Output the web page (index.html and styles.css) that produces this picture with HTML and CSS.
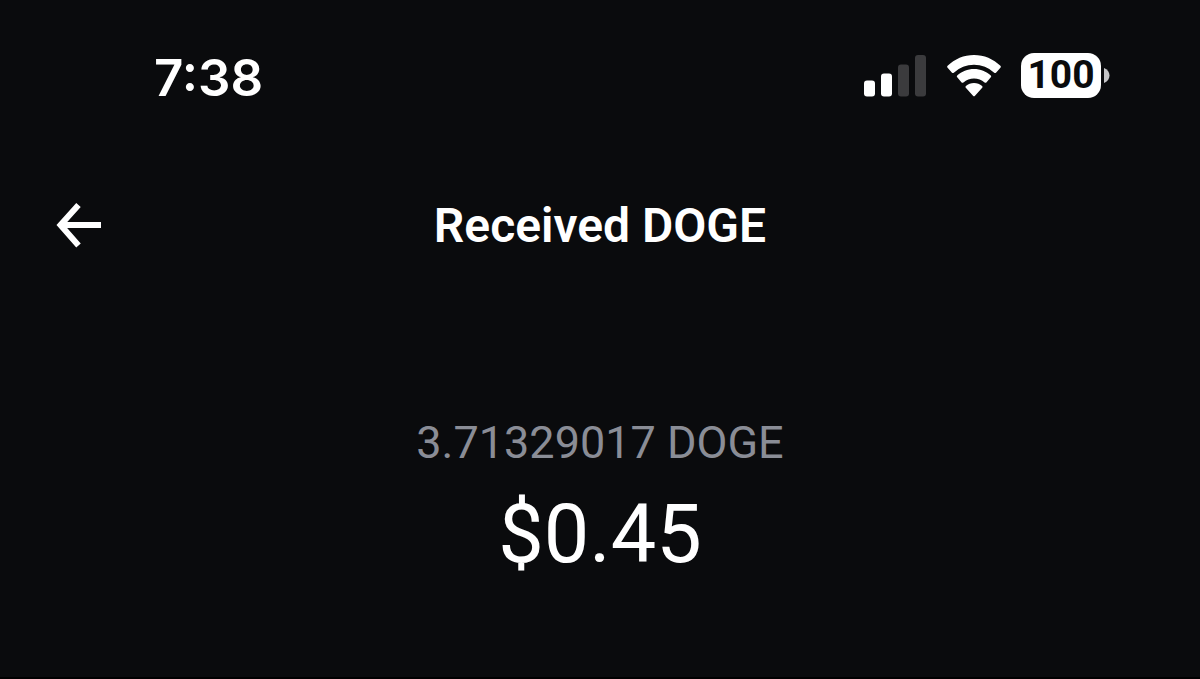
FILE: index.html
```
<!DOCTYPE html>
<html lang="en">
<head>
    <meta charset="UTF-8">
    <meta name="viewport" content="width=device-width, initial-scale=1.0">
    <title>Received DOGE</title>
    <link rel="stylesheet" href="styles.css">
</head>
<body>
    <div class="status-bar">
        <time class="clock">7:38</time>
        <div class="status-icons">
            <svg class="signal" width="63" height="42" viewBox="0 0 63 42" aria-hidden="true">
                <rect x="0" y="25.500" width="11" height="16" rx="3" fill="#fff"/>
                <rect x="17" y="18.500" width="11" height="23" rx="3" fill="#fff"/>
                <rect x="34" y="9.500" width="11" height="32" rx="3" fill="#3b3b3d"/>
                <rect x="51" y="0" width="11" height="41.500" rx="3" fill="#3b3b3d"/>
            </svg>
            <svg class="wifi" width="54" height="42" viewBox="0 0 54 42" fill="#fff" aria-hidden="true">
                <path d="M27 0C17 0 7.500 4 .6 10.800Q-.3 11.800.6 12.700L5 17.700Q5.900 18.500 6.800 17.700A29.500 29.500 0 0 1 47.200 17.700Q48.100 18.500 49 17.700L53.400 12.700Q54.300 11.800 53.400 10.800C46.500 4 37 0 27 0Z"/>
                <path d="M27 14C20.600 14 14.700 16.500 10.200 20.500Q9.300 21.400 10.200 22.300L14.600 27.400Q15.500 28.200 16.400 27.400A16 16 0 0 1 37.600 27.400Q38.500 28.200 39.400 27.400L43.800 22.300Q44.700 21.400 43.800 20.500C39.300 16.500 33.400 14 27 14Z"/>
                <path d="M27 28C23.900 28 21.100 29.100 18.900 30.900Q17.900 31.800 18.800 32.700L26 40.800Q27 41.800 28 40.800L35.200 32.700Q36.100 31.800 35.100 30.900C32.900 29.100 30.100 28 27 28Z"/>
            </svg>
            <div class="battery">
                <span class="battery-level">100</span>
                <svg width="6" height="15" viewBox="0 0 6 15" aria-hidden="true">
                    <path d="M0 0C3.500 1.500 5.500 4.200 5.500 7.500S3.500 13.500 0 15Z" fill="#c4c4c6"/>
                </svg>
            </div>
        </div>
    </div>

    <header class="top-nav">
        <button type="button" class="back" aria-label="Back">
            <svg width="46" height="46" viewBox="0 0 46 46" fill="none" stroke="#fff" stroke-width="6" aria-hidden="true">
                <path d="M22.500 2L4.500 22L22.500 42.500M4.500 22H45"/>
            </svg>
        </button>
        <h1>Received DOGE</h1>
    </header>

    <main class="summary">
        <p class="crypto-amount">3.71329017 DOGE</p>
        <p class="cash-amount">$0.45</p>
    </main>
</body>
</html>
```
FILE: styles.css
```
* {
    box-sizing: border-box;
}

body {
    margin: 0;
    min-height: 100vh;
    background: #0a0b0d;
    border-bottom: 2px solid #000;
    color: #fff;
    font-family: Roboto, "Liberation Sans", sans-serif;
}

/* Status bar */
.status-bar {
    display: flex;
    justify-content: space-between;
    align-items: flex-start;
    padding: 53px 90px 0 154px;
}

.clock {
    font-family: Inter, "Liberation Sans", sans-serif;
    font-size: 51px;
    font-weight: 600;
    line-height: 50px;
}

.status-icons {
    display: flex;
    align-items: center;
    gap: 20px;
}

.battery {
    display: flex;
    align-items: center;
    gap: 3px;
}

.battery-level {
    width: 80px;
    border-radius: 13px;
    background: #fff;
    color: #0a0b0d;
    font-size: 39px;
    font-weight: 700;
    line-height: 45px;
    text-align: center;
}

/* Navigation */
.top-nav {
    display: grid;
    grid-template-columns: 46px 1fr 46px;
    align-items: center;
    padding: 95px 56px 0;
}

.back {
    display: block;
    padding: 0;
    border: none;
    background: none;
    cursor: pointer;
}

.back svg {
    display: block;
}

h1 {
    margin: 0;
    font-size: 48px;
    font-weight: 600;
    line-height: 56px;
    text-align: center;
}

/* Amounts */
.summary {
    padding-top: 159px;
    text-align: center;
}

.summary p {
    margin: 0;
}

.crypto-amount {
    color: #8a8d96;
    font-size: 45px;
    line-height: 60px;
}

.cash-amount {
    font-size: 81px;
    line-height: 124px;
}
```
